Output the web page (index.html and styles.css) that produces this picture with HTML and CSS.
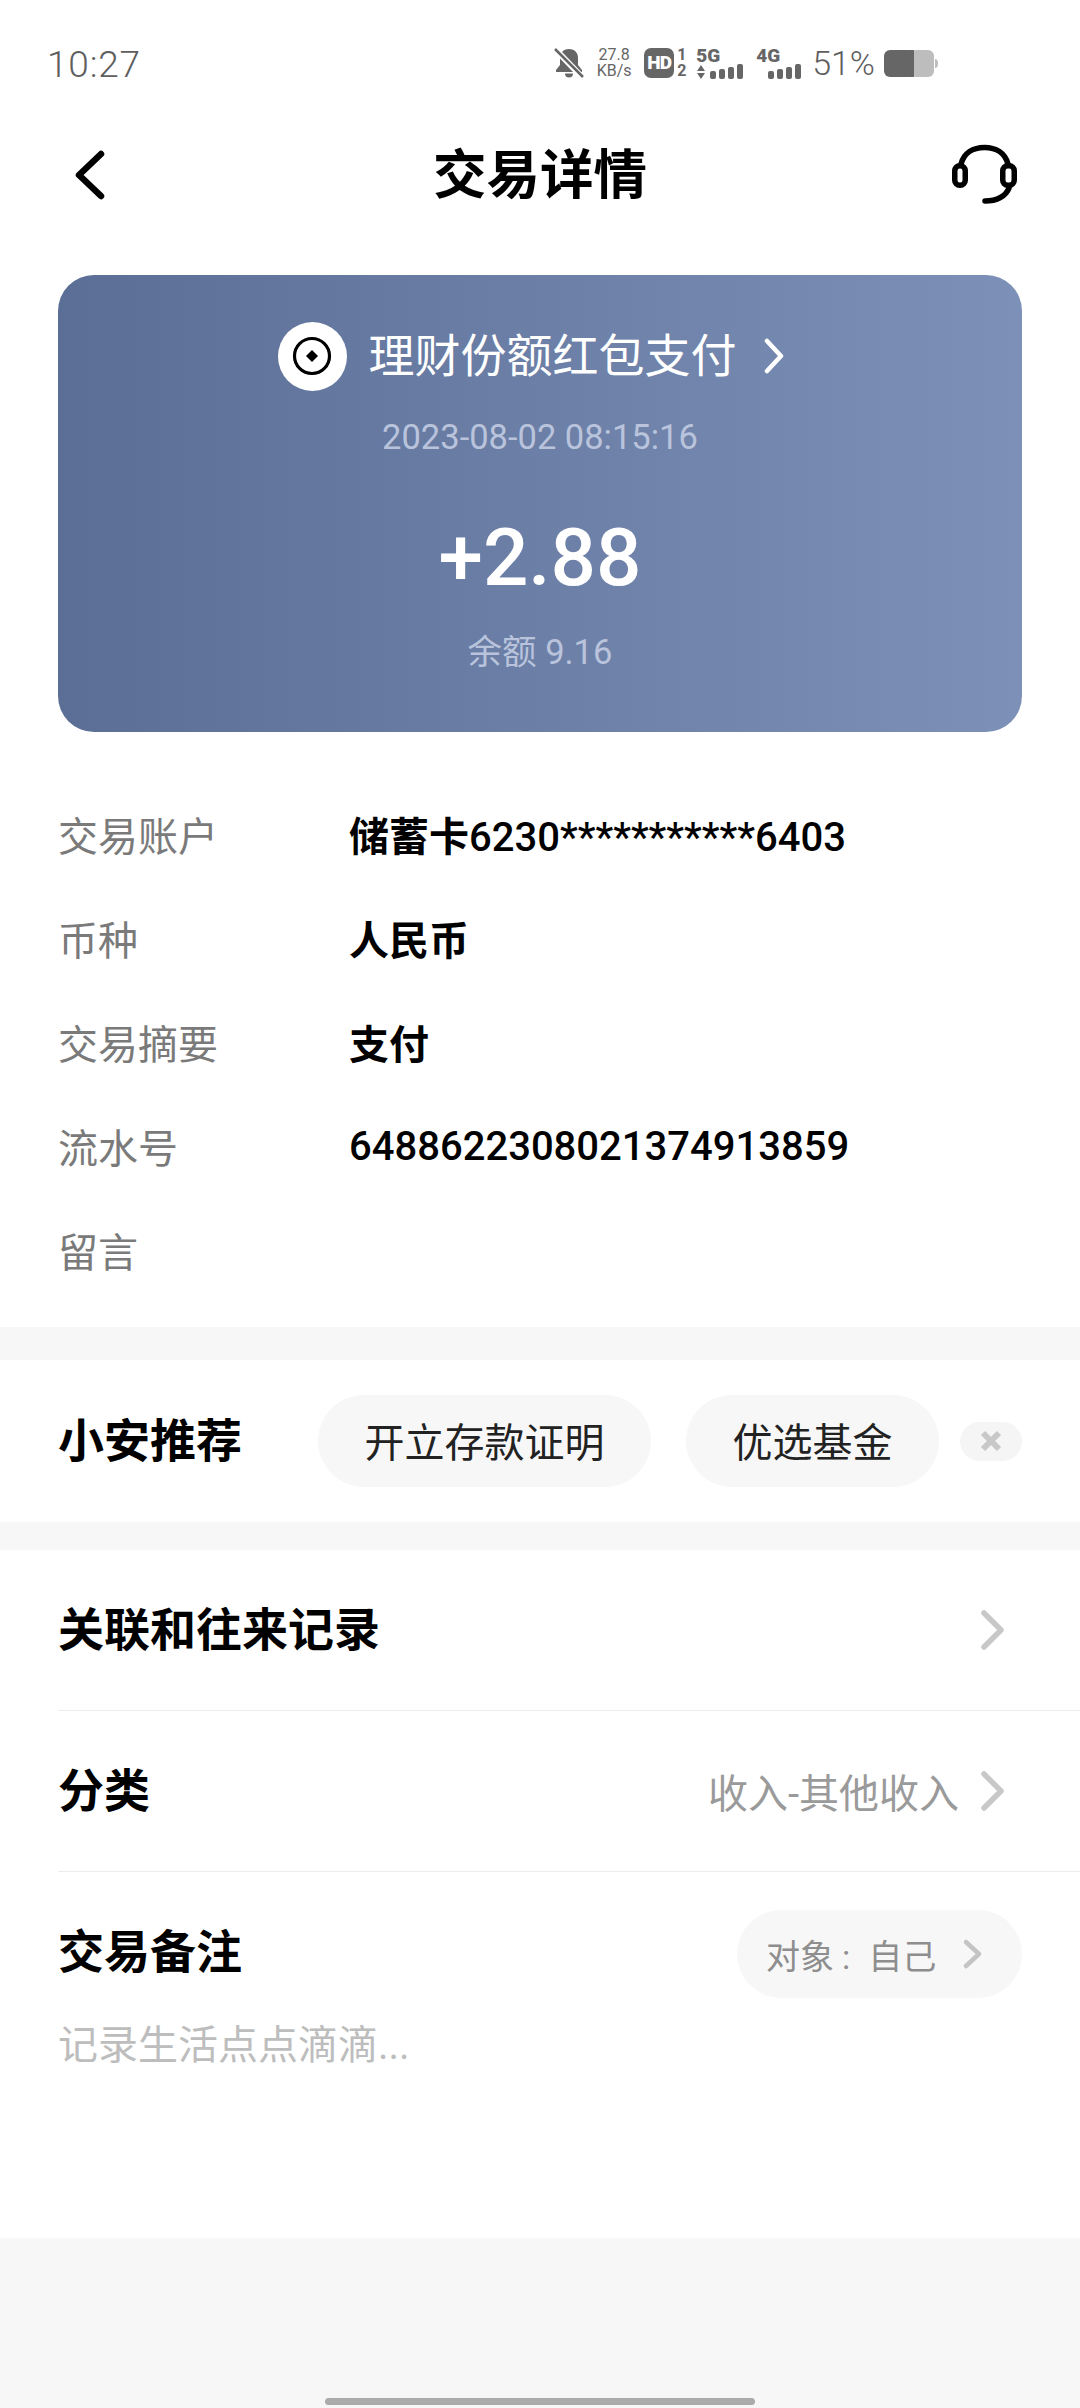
FILE: index.html
```html
<!DOCTYPE html>
<html lang="zh-CN">
<head>
<meta charset="utf-8">
<title>交易详情</title>
<link rel="stylesheet" href="styles.css">
</head>
<body>
<div class="screen">
  <div class="top">
    <div class="status">
      <span class="time">10:27</span>
      <div class="sys">
        <svg class="bell" width="30" height="30" viewBox="0 0 30 30"><path d="M15 1c-6 0-9 4-9 9v7l-4 5v2h26v-2l-4-5v-7c0-5-3-9-9-9z" fill="#666"/><path d="M11 25.500a4 4 0 0 0 8 0z" fill="#666"/><path d="M2 2l26 27" stroke="#fff" stroke-width="6"/><path d="M1 1l28 28" stroke="#666" stroke-width="2.500"/></svg>
        <div class="speed"><span>27.8</span><span>KB/s</span></div>
        <div class="hd"><span class="hd-box">HD</span><div class="hd-nums"><span>1</span><span>2</span></div></div>
        <div class="sig sig-5g">
          <span class="sig-name">5G</span>
          <div class="sig-low">
            <svg class="arrows" width="10" height="14" viewBox="0 0 10 14"><path d="M5 0l4 6H1zM1 8h8l-4 6z" fill="#666"/></svg>
            <svg width="35" height="15" viewBox="0 0 35 15"><g fill="#666"><rect x="0" y="7" width="6" height="8" rx="2"/><rect x="9" y="5" width="6" height="10" rx="2"/><rect x="18" y="3" width="6" height="12" rx="2"/><rect x="27" y="0" width="6" height="15" rx="2"/></g></svg>
          </div>
        </div>
        <div class="sig sig-4g">
          <span class="sig-name">4G</span>
          <svg class="bars-4g" width="35" height="15" viewBox="0 0 35 15"><g fill="#666"><rect x="0" y="7" width="6" height="8" rx="2"/><rect x="9" y="5" width="6" height="10" rx="2"/><rect x="18" y="3" width="6" height="12" rx="2"/><rect x="27" y="0" width="6" height="15" rx="2"/></g></svg>
        </div>
        <span class="pct">51%</span>
        <svg width="54" height="27" viewBox="0 0 54 27"><rect x="26" y="0" width="24" height="27" rx="6" fill="#bdbdbd"/><rect x="0" y="0" width="30" height="27" rx="6" fill="#666"/><rect x="25" y="0" width="5" height="27" fill="#666"/><path d="M51 9c2 0 3 1.500 3 4.500S53 18 51 18z" fill="#bdbdbd"/></svg>
      </div>
    </div>

    <div class="nav">
      <svg class="nav-back" width="34" height="50" viewBox="0 0 34 50"><path d="M29 4L7 25l22 21" fill="none" stroke="#000" stroke-width="6.500" stroke-linecap="round" stroke-linejoin="round"/></svg>
      <h1 class="nav-title">交易详情</h1>
      <svg class="nav-help" width="70" height="62" viewBox="0 0 70 62"><g fill="none" stroke="#000" stroke-width="5.500" stroke-linecap="round"><path d="M11 21C14 10 23 4.500 34.500 4.500S55 10 58 21"/><rect x="4.750" y="22.750" width="10.500" height="19.500" rx="5"/><rect x="52.750" y="22.750" width="11.500" height="19.500" rx="5"/><path d="M59 45C56 53 47 58 35 58"/></g></svg>
    </div>

    <div class="card">
      <div class="card-head">
        <span class="coin"><svg width="40" height="40" viewBox="0 0 40 40"><circle cx="20" cy="20" r="17.500" fill="none" stroke="#000" stroke-width="3.200"/><path d="M20 14l6 6-6 6-6-6z" fill="#000"/></svg></span>
        <span class="card-name">理财份额红包支付</span>
        <svg width="22" height="36" viewBox="0 0 22 36"><path d="M4 3l14 15L4 33" fill="none" stroke="#fff" stroke-width="4.500" stroke-linecap="round" stroke-linejoin="round"/></svg>
      </div>
      <div class="card-date">2023-08-02 08:15:16</div>
      <div class="card-amount">+2.88</div>
      <div class="card-balance">余额 9.16</div>
    </div>

    <dl class="details">
      <div class="detail"><dt>交易账户</dt><dd><b class="cjk">储蓄卡</b>6230***********6403</dd></div>
      <div class="detail"><dt>币种</dt><dd><b class="cjk">人民币</b></dd></div>
      <div class="detail"><dt>交易摘要</dt><dd><b class="cjk">支付</b></dd></div>
      <div class="detail"><dt>流水号</dt><dd>6488622308021374913859</dd></div>
      <div class="detail"><dt>留言</dt><dd></dd></div>
    </dl>
  </div>

  <div class="rec">
    <span class="rec-title">小安推荐</span>
    <span class="chip chip-a">开立存款证明</span>
    <span class="chip chip-b">优选基金</span>
    <span class="rec-close"><svg width="24" height="24" viewBox="0 0 24 24"><path d="M4 4l16 16M20 4L4 20" stroke="#c8c8c8" stroke-width="6"/></svg></span>
  </div>

  <div class="list">
    <div class="row">
      <span class="row-title">关联和往来记录</span>
      <svg class="chev" width="28" height="42" viewBox="0 0 28 42"><path d="M5 4l17 17L5 38" fill="none" stroke="#c8c8c8" stroke-width="5.500" stroke-linecap="round" stroke-linejoin="round"/></svg>
    </div>
    <div class="row">
      <span class="row-title">分类</span>
      <span class="row-value">收入-其他收入</span>
      <svg class="chev" width="28" height="42" viewBox="0 0 28 42"><path d="M5 4l17 17L5 38" fill="none" stroke="#c8c8c8" stroke-width="5.500" stroke-linecap="round" stroke-linejoin="round"/></svg>
    </div>
    <div class="note">
      <div class="note-head">
        <span class="row-title note-title">交易备注</span>
        <span class="pill">
          <span class="pill-text">对象<span class="pill-colon">:</span>自己</span>
          <svg width="22" height="32" viewBox="0 0 22 32"><path d="M4 4l13 12L4 28" fill="none" stroke="#c4c4c4" stroke-width="4.500" stroke-linecap="round" stroke-linejoin="round"/></svg>
        </span>
      </div>
      <div class="note-hint">记录生活点点滴滴...</div>
    </div>
  </div>

  <div class="foot"><span class="home"></span></div>
</div>
</body>
</html>
```
FILE: styles.css
```css
* { box-sizing: border-box; }
html, body { margin: 0; padding: 0; }
body {
  width: 1080px;
  height: 2408px;
  overflow: hidden;
  font-family: Roboto, "Noto Sans CJK SC", sans-serif;
  color: #000;
}
.screen { width: 1080px; height: 2408px; display: flex; flex-direction: column; background: #f7f7f7; }
.top { background: #fff; height: 1327px; }

.status { height: 128px; padding: 47px 142px 0 47px; display: flex; justify-content: space-between; align-items: flex-start; }
.time { font-size: 37px; line-height: 36px; font-weight: 300; color: #5e5e5e; letter-spacing: .8px; }
.sys { display: flex; align-items: center; height: 32px; color: #666; }
.bell { margin-right: 10px; }
.speed { display: flex; flex-direction: column; font-size: 16px; line-height: 16px; width: 40px; margin-right: 10px; align-items: center; }
.hd { display: flex; align-items: center; margin-right: 8px; }
.hd-box { width: 30px; height: 30px; border-radius: 7px; background: #666; color: #fff; font-size: 19px; line-height: 30px; font-weight: 900; text-align: center; letter-spacing: -1px; }
.hd-nums { display: flex; flex-direction: column; font-size: 16px; line-height: 16px; font-weight: 700; margin-left: 3px; width: 11px; }
.sig { display: flex; flex-direction: column; height: 31px; }
.sig-5g { width: 49px; margin-right: 11px; }
.sig-4g { width: 47px; margin-right: 9px; }
.sig-name { font-size: 19px; line-height: 16px; font-weight: 900; }
.sig-low { display: flex; align-items: flex-end; justify-content: space-between; height: 15px; }
.bars-4g { align-self: flex-end; }
.pct { font-size: 34px; line-height: 32px; font-weight: 300; margin-right: 9px; color: #5e5e5e; }

.nav { height: 94px; padding: 0 60px 0 72px; display: flex; justify-content: space-between; align-items: center; position: relative; }
.nav-title { position: absolute; left: 0; right: 0; margin: 0; padding-top: 2px; text-align: center; font-size: 53.500px; line-height: 94px; font-weight: 700; }
.nav-help { margin-top: -2px; }

.card {
  margin: 53px 58px 0;
  height: 457px;
  border-radius: 36px;
  background: linear-gradient(90deg, #5b6e96, #7d90b8);
  display: flex;
  flex-direction: column;
  align-items: center;
  padding-top: 47px;
  color: #fff;
}
.card-head { display: flex; align-items: center; height: 68px; padding-right: 18px; }
.coin { width: 69px; height: 69px; border-radius: 50%; background: #fff; display: flex; align-items: center; justify-content: center; margin-right: 22px; }
.card-name { font-size: 46px; line-height: 68px; margin-right: 26px; }
.card-date { margin-top: 27px; font-size: 34.500px; line-height: 40px; color: #b9c4dc; }
.card-amount { margin-top: 55px; font-size: 80px; line-height: 92px; font-weight: 500; }
.card-balance { margin-top: 26px; font-size: 34.500px; line-height: 44px; color: #b9c4dc; }

.details { margin: 53px 0 0; padding: 0 58px; }
.detail { display: flex; align-items: center; height: 104px; padding-bottom: 6px; }
.detail dt { width: 291px; font-size: 40px; color: #7a7a7a; }
.detail dd { margin: 0; font-size: 40px; font-weight: 500; color: #000; }
.cjk { font-weight: 700; }

.rec { margin-top: 33px; height: 162px; background: #fff; padding: 0 58px; display: flex; align-items: center; }
.rec-title { width: 260px; font-size: 46px; font-weight: 700; padding-bottom: 9px; }
.chip { height: 92px; border-radius: 46px; background: #f7f7f7; display: flex; align-items: center; justify-content: center; font-size: 40px; color: #222; padding-bottom: 3px; }
.chip-a { width: 333px; margin-right: 35px; }
.chip-b { width: 253px; margin-right: 21px; }
.rec-close { width: 62px; height: 39px; border-radius: 20px; background: #f5f5f5; display: flex; align-items: center; justify-content: center; }

.list { margin-top: 28px; background: #fff; padding-left: 58px; height: 688px; }
.row { height: 161px; border-bottom: 1px solid #ececec; padding-right: 73px; display: flex; align-items: center; }
.row-title { font-size: 46px; font-weight: 700; margin-right: auto; padding-bottom: 9px; }
.row-value { font-size: 40px; color: #9a9a9a; margin-right: 20px; }
.note { padding: 38px 58px 0 0; }
.note-head { display: flex; align-items: center; height: 88px; }
.note-title { padding-bottom: 12px; }
.pill { width: 285px; height: 88px; border-radius: 44px; background: #f7f7f7; display: flex; align-items: center; padding-left: 29px; }
.pill-text { font-size: 34px; color: #8e8e8e; width: 196px; }
.pill-colon { margin: 0 18px 0 8px; }
.note-hint { margin-top: 24px; font-size: 40px; line-height: 48px; color: #bdbdbd; }

.foot { flex: 1; display: flex; align-items: flex-end; justify-content: center; padding-bottom: 3px; }
.home { width: 430px; height: 7px; border-radius: 4px; background: #ababab; }
```
